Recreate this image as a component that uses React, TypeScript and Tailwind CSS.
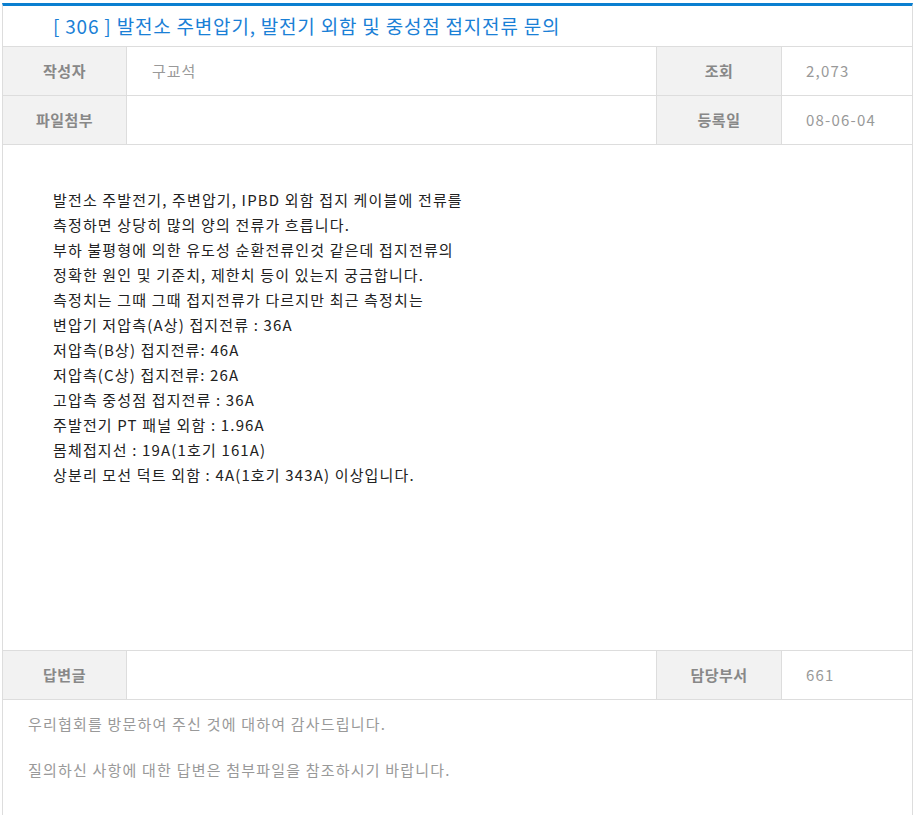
const body = [
  '발전소 주발전기, 주변압기, IPBD 외함 접지 케이블에 전류를',
  '측정하면 상당히 많의 양의 전류가 흐릅니다.',
  '부하 불평형에 의한 유도성 순환전류인것 같은데 접지전류의',
  '정확한 원인 및 기준치, 제한치 등이 있는지 궁금합니다.',
  '측정치는 그때 그때 접지전류가 다르지만 최근 측정치는',
  '변압기 저압측(A상) 접지전류 : 36A',
  '저압측(B상) 접지전류: 46A',
  '저압측(C상) 접지전류: 26A',
  '고압측 중성점 접지전류 : 36A',
  '주발전기 PT 패널 외함 : 1.96A',
  '몸체접지선 : 19A(1호기 161A)',
  '상분리 모선 덕트 외함 : 4A(1호기 343A) 이상입니다.',
]

function InfoRow({
  label,
  value,
  label2,
  value2,
}: {
  label: string
  value: string
  label2: string
  value2: string
}) {
  return (
    <div className="flex h-[49px] border-b border-[#dddddd] text-[15px]">
      <div className="w-[124px] border-r border-[#dddddd] bg-[#f2f2f2] flex items-center justify-center font-semibold text-[#888888] tracking-[0.5px]">
        {label}
      </div>
      <div className="w-[530px] border-r border-[#dddddd] flex items-center pl-[25px] text-[#999999] tracking-[1px]">
        {value}
      </div>
      <div className="w-[125px] border-r border-[#dddddd] bg-[#f2f2f2] flex items-center justify-center font-semibold text-[#888888] tracking-[0.5px]">
        {label2}
      </div>
      <div className="flex-1 flex items-center pl-[24px] text-[#999999] tracking-[1.2px]">{value2}</div>
    </div>
  )
}

export default function App() {
  return (
    <div
      className="w-[916px] h-[815px] overflow-hidden bg-white pt-[3px] pl-[2px]"
      style={{ fontFamily: '"Noto Sans CJK KR", "Noto Sans", sans-serif' }}
    >
      <div className="w-[911px] border-t-[3px] border-t-[#0a7fd0] border-x border-x-[#dddddd]">
        <div className="h-[41px] border-b border-[#dddddd] flex items-center pl-[50px] text-[19px] text-[#1a80d6] tracking-[0.8px]">
          [ 306 ] 발전소 주변압기, 발전기 외함 및 중성점 접지전류 문의
        </div>

        <InfoRow label="작성자" value="구교석" label2="조회" value2="2,073" />
        <InfoRow label="파일첨부" value="" label2="등록일" value2="08-06-04" />

        <div className="h-[506px] border-b border-[#dddddd] pt-[42px] pl-[50px] text-[15px] leading-[25px] text-[#222222] tracking-[1.15px]">
          {body.map((line, i) => (
            <p key={i}>{line}</p>
          ))}
        </div>

        <InfoRow label="답변글" value="" label2="담당부서" value2="661" />

        <div className="h-[200px] pt-[12px] pl-[25px] text-[15px] leading-[23px] text-[#999999] tracking-[1.2px]">
          <p>우리협회를 방문하여 주신 것에 대하여 감사드립니다.</p>
          <p>&nbsp;</p>
          <p>질의하신 사항에 대한 답변은 첨부파일을 참조하시기 바랍니다.</p>
        </div>
      </div>
    </div>
  )
}
